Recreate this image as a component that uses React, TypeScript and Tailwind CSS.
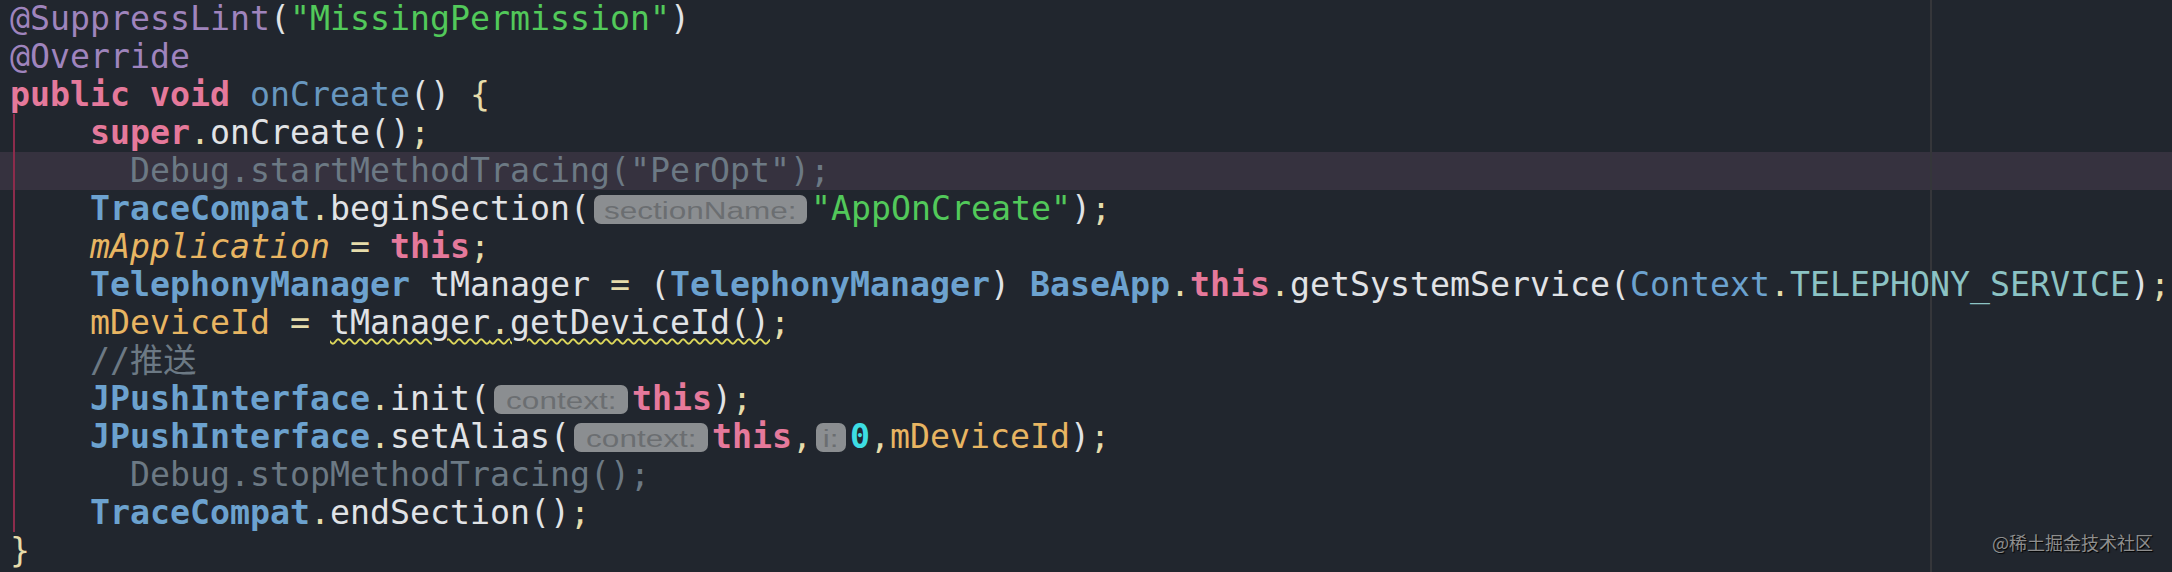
import type { ReactNode } from 'react';

// token colours
const annot = 'text-[#9f84bd]';
const str = 'text-[#52c95a]';
const plain = 'text-[#e1e3e6]';
const kw = 'text-[#e5799b] font-bold';
const method = 'text-[#6897bf]';
const cream = 'text-[#e6dcaa]';
const muted = 'text-[#6c7984]';
const cls = 'text-[#6ca2cf] font-bold';
const clsPlain = 'text-[#6ca2cf]';
const field = 'text-[#e8b562]';
const fieldItalic = 'text-[#e8b562] italic';
const konst = 'text-[#8cc3c4]';
const num = 'text-[#3ddde3] font-bold';

type Tok = [string, string];

function Hint({ label, width }: { label: string; width: string }) {
  return (
    <span
      className={`mx-[4px] flex h-[29px] items-start justify-center rounded-[7px] bg-[#8b8e91] pt-[3px] font-['Liberation_Sans',Arial,sans-serif] text-[23px] leading-[26px] text-[#6b6e71] ${width}`}
    >
      <span className="inline-block scale-x-[1.37]">{label}</span>
    </span>
  );
}

function Toks({ toks }: { toks: Tok[] }) {
  return (
    <>
      {toks.map(([t, c], i) => (
        <span key={i} className={c}>
          {t}
        </span>
      ))}
    </>
  );
}

function Row({ children, active }: { children: ReactNode; active?: boolean }) {
  return (
    <div
      className={`flex h-[38px] items-center whitespace-pre pl-[10px] leading-[38px] ${active ? 'bg-[#36323f]' : ''}`}
    >
      {children}
    </div>
  );
}

export default function App() {
  return (
    <div className="relative h-[572px] w-[2172px] overflow-hidden bg-[#21262e] font-['DejaVu_Sans_Mono','Noto_Sans_CJK_SC',monospace] text-[33.22px]">
      <Row>
        <Toks toks={[['@SuppressLint', annot], ['(', plain], ['"MissingPermission"', str], [')', plain]]} />
      </Row>
      <Row>
        <Toks toks={[['@Override', annot]]} />
      </Row>
      <Row>
        <Toks toks={[['public void', kw], [' ', plain], ['onCreate', method], ['() ', plain], ['{', cream]]} />
      </Row>
      <Row>
        <Toks toks={[['    ', plain], ['super', kw], ['.', cream], ['onCreate()', plain], [';', cream]]} />
      </Row>
      <Row active>
        <Toks toks={[['      Debug.startMethodTracing("PerOpt");', muted]]} />
      </Row>
      <Row>
        <Toks toks={[['    ', plain], ['TraceCompat', cls], ['.', cream], ['beginSection(', plain]]} />
        <Hint label="sectionName:" width="w-[213px]" />
        <Toks toks={[['"AppOnCreate"', str], [')', plain], [';', cream]]} />
      </Row>
      <Row>
        <Toks toks={[['    ', plain], ['mApplication', fieldItalic], [' = ', cream], ['this', kw], [';', cream]]} />
      </Row>
      <Row>
        <Toks
          toks={[
            ['    ', plain],
            ['TelephonyManager', cls],
            [' tManager ', plain],
            ['=', cream],
            [' (', plain],
            ['TelephonyManager', cls],
            [') ', plain],
            ['BaseApp', cls],
            ['.', cream],
            ['this', kw],
            ['.', cream],
            ['getSystemService(', plain],
            ['Context', clsPlain],
            ['.', cream],
            ['TELEPHONY_SERVICE', konst],
            [')', plain],
            [';', cream],
          ]}
        />
      </Row>
      <Row>
        <Toks toks={[['    ', plain], ['mDeviceId', field], [' = ', cream]]} />
        <span className="underline decoration-[#dcd65a] decoration-wavy decoration-[1.5px] underline-offset-[4px]">
          <span className={plain}>tManager</span>
          <span className={cream}>.</span>
          <span className={plain}>getDeviceId()</span>
        </span>
        <Toks toks={[[';', cream]]} />
      </Row>
      <Row>
        <Toks toks={[['    //推送', muted]]} />
      </Row>
      <Row>
        <Toks toks={[['    ', plain], ['JPushInterface', cls], ['.', cream], ['init(', plain]]} />
        <Hint label="context:" width="w-[134px]" />
        <Toks toks={[['this', kw], [')', plain], [';', cream]]} />
      </Row>
      <Row>
        <Toks toks={[['    ', plain], ['JPushInterface', cls], ['.', cream], ['setAlias(', plain]]} />
        <Hint label="context:" width="w-[134px]" />
        <Toks toks={[['this', kw], [',', cream]]} />
        <Hint label="i:" width="w-[30px]" />
        <Toks toks={[['0', num], [',', cream], ['mDeviceId', field], [')', plain], [';', cream]]} />
      </Row>
      <Row>
        <Toks toks={[['      Debug.stopMethodTracing();', muted]]} />
      </Row>
      <Row>
        <Toks toks={[['    ', plain], ['TraceCompat', cls], ['.', cream], ['endSection()', plain], [';', cream]]} />
      </Row>
      <Row>
        <Toks toks={[['}', cream]]} />
      </Row>

      {/* scope marker for the method body */}
      <div className="absolute left-[13px] top-[114px] h-[418px] w-[2px] bg-[#8c2c4c]" />
      {/* right margin guide */}
      <div className="absolute left-[1930px] top-0 h-full w-[2px] bg-[#35363a]" />
      {/* watermark */}
      <div className="absolute left-[1992px] top-[533px] font-['Noto_Sans_CJK_SC',sans-serif] text-[18px] leading-[18px] text-[#8e8e8e] [text-shadow:1px_1px_1px_#000]">
        @稀土掘金技术社区
      </div>
    </div>
  );
}
